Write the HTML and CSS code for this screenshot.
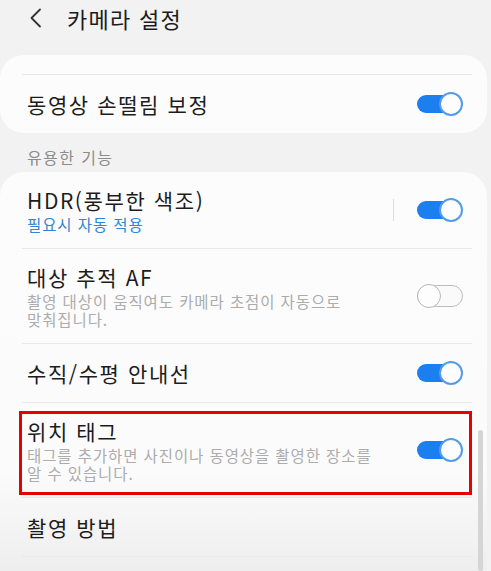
FILE: index.html
```html
<!DOCTYPE html>
<html lang="ko">
<head>
<meta charset="utf-8">
<title>카메라 설정</title>
<link rel="stylesheet" href="styles.css">
</head>
<body>
<div class="screen">
  <header class="appbar">
    <svg class="back" width="14" height="20" viewBox="0 0 14 20" aria-hidden="true">
      <polyline points="11,1.5 2.5,10 11,18.5" fill="none" stroke="#333" stroke-width="1.8" stroke-linecap="round" stroke-linejoin="round"/>
    </svg>
    <h1 class="appbar-title">카메라 설정</h1>
  </header>

  <section class="card card-top">
    <div class="list">
      <div class="row row-first">
        <div class="row-text">
          <div class="row-title">동영상 손떨림 보정</div>
        </div>
        <span class="switch on"><span class="track"></span><span class="thumb"></span></span>
      </div>
    </div>
  </section>

  <div class="section-label">유용한 기능</div>

  <section class="card card-main">
    <div class="list">
      <div class="row">
        <div class="row-text">
          <div class="row-title">HDR(풍부한 색조)</div>
          <div class="row-sub blue">필요시 자동 적용</div>
        </div>
        <span class="vsep"></span>
        <span class="switch on"><span class="track"></span><span class="thumb"></span></span>
      </div>
      <div class="row">
        <div class="row-text">
          <div class="row-title">대상 추적 AF</div>
          <div class="row-sub">촬영 대상이 움직여도 카메라 초점이 자동으로 맞춰집니다.</div>
        </div>
        <span class="switch off"><span class="track"></span><span class="thumb"></span></span>
      </div>
      <div class="row">
        <div class="row-text">
          <div class="row-title">수직/수평 안내선</div>
        </div>
        <span class="switch on"><span class="track"></span><span class="thumb"></span></span>
      </div>
      <div class="row row-marked">
        <div class="row-text">
          <div class="row-title">위치 태그</div>
          <div class="row-sub">태그를 추가하면 사진이나 동영상을 촬영한 장소를 알 수 있습니다.</div>
        </div>
        <span class="switch on"><span class="track"></span><span class="thumb"></span></span>
        <span class="highlight"></span>
      </div>
      <div class="row">
        <div class="row-text">
          <div class="row-title">촬영 방법</div>
        </div>
      </div>
    </div>
    <span class="scrollbar"></span>
  </section>
</div>
</body>
</html>
```

FILE: styles.css
```css
html, body {
  margin: 0;
  padding: 0;
}

body {
  background: #f2f2f2;
  font-family: "Noto Sans CJK KR", "Noto Sans", sans-serif;
  color: #1c1c1c;
  word-break: keep-all;
}

.screen {
  width: 491px;
  height: 571px;
  overflow: hidden;
  background: #f2f2f2;
}

.appbar {
  height: 36px;
  display: flex;
  align-items: center;
  padding-left: 29px;
  gap: 24px;
}

.back {
  display: block;
}

.appbar-title {
  margin: 0;
  font-size: 22px;
  font-weight: 400;
  line-height: 30px;
  letter-spacing: 1.3px;
  color: #1c1c1c;
}

.card {
  width: 487px;
  background: #fcfcfc;
  box-sizing: border-box;
  padding: 0 15px 0 22px;
}

.card-top {
  margin-top: 19px;
  padding-top: 19px;
  border-radius: 24px;
}

.card-main {
  position: relative;
  height: 399px;
  border-radius: 24px 24px 0 0;
  background: linear-gradient(#fcfcfc 0, #fbfbfb 300px, #eeeeee 399px);
}

.section-label {
  padding: 14px 0 5px 27px;
  font-size: 16px;
  line-height: 20px;
  letter-spacing: 1.4px;
  color: #8c8c8c;
}

.list {
  display: flex;
  flex-direction: column;
}

.row {
  position: relative;
  display: flex;
  align-items: center;
  box-sizing: border-box;
  min-height: 59px;
  padding: 15px 9px 15px 5px;
  border-bottom: 1px solid #e8e8e8;
}

.row-first {
  border-bottom: none;
  border-top: 1px solid #e8e8e8;
}

.row-text {
  flex: 1;
  min-width: 0;
}

.row-title {
  font-size: 21px;
  line-height: 26px;
  letter-spacing: 1.6px;
  color: #1c1c1c;
}

.row-sub {
  margin-top: 2px;
  max-width: 356px;
  font-size: 15.5px;
  line-height: 18px;
  letter-spacing: 0.9px;
  color: #acacac;
}

.row-sub.blue {
  color: #2f86d6;
}

.vsep {
  width: 1px;
  height: 22px;
  background: #dedede;
  margin-right: 23px;
}

.switch {
  position: relative;
  flex: none;
  width: 46px;
  height: 24px;
}

.switch .track {
  position: absolute;
  left: 0;
  top: 3px;
  width: 44px;
  height: 18px;
  border-radius: 9px;
  box-sizing: border-box;
}

.switch .thumb {
  position: absolute;
  top: 0;
  width: 24px;
  height: 24px;
  border-radius: 50%;
  box-sizing: border-box;
  background: #fdfdfd;
}

.switch.on .track {
  background: #1b7ff0;
}

.switch.on .thumb {
  right: 0;
  border: 2px solid #559be8;
}

.switch.off .track {
  top: 1px;
  height: 22px;
  width: 46px;
  border-radius: 11px;
  border: 1.5px solid #bdbdbd;
  background: #fafafa;
}

.switch.off .thumb {
  left: 0;
  border: 1.5px solid #b8b8b8;
}

.highlight {
  position: absolute;
  left: -3px;
  right: 0;
  top: 8px;
  bottom: 2px;
  border: 3px solid #e60000;
  pointer-events: none;
}

.scrollbar {
  position: absolute;
  right: 4px;
  top: 258px;
  bottom: 0;
  width: 5px;
  border-radius: 3px;
  background: #d5d5d5;
}
```
